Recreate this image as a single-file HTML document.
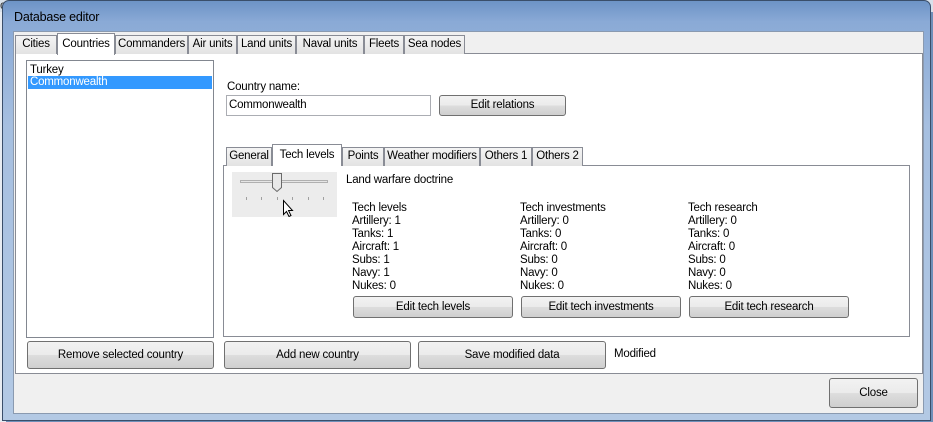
<!DOCTYPE html>
<html><head><meta charset="utf-8"><style>
*{box-sizing:border-box}
body{margin:0;width:933px;height:422px;overflow:hidden;background:#6f8fb8;font-family:"Liberation Sans",Arial,sans-serif;font-size:11.5px;color:#000;position:relative;letter-spacing:-0.2px}
.a{position:absolute}
.frame{left:2px;top:0;width:929px;height:421px;border:1px solid #3a4e6a;border-radius:7px 7px 0 0;background:linear-gradient(180deg,#6d93c6 0%,#8aaad6 5%,#a6bfe0 30%,#b3c9e4 100%)}
.client{left:13px;top:31px;width:911px;height:383px;background:#f0f0f0;border:1px solid #8a9ab0}
.panel{background:#fff;border:1px solid #898c95}
.tab{position:absolute;height:19px;background:linear-gradient(#f4f4f4,#e3e3e3);border:1px solid #898c95;border-bottom:none;text-align:center;line-height:17px;white-space:nowrap;overflow:hidden}
.tab.sel{background:#fff;height:22px;line-height:20px;z-index:2}
.btn{position:absolute;border:1px solid #707070;border-radius:3px;background:linear-gradient(#f2f2f2 0%,#ebebeb 50%,#dddddd 51%,#cfcfcf 100%);text-align:center;white-space:nowrap}
.t{position:absolute;white-space:nowrap;line-height:13px}
</style></head><body>
<div class="a" style="left:0;top:0;width:933px;height:12px;background:#d8e0ea"></div>
<div class="t" style="left:0;top:0;color:#333">col  ·  Questions - 1/16/2013 9:01:17 PM</div>
<div class="a" style="left:0;top:12px;width:6px;height:410px;background:#e8ecf2"></div>
<div class="a frame"></div>
<div class="t" style="left:14px;top:11px;font-size:12.5px">Database editor</div>
<div class="a client"></div>
<!-- main tabs -->
<div class="a panel" style="left:15px;top:53px;width:908px;height:321px"></div>
<div class="tab" style="left:15px;top:35px;width:42px">Cities</div>
<div class="tab sel" style="left:57px;top:33px;width:58px">Countries</div>
<div class="tab" style="left:115px;top:35px;width:73px">Commanders</div>
<div class="tab" style="left:188px;top:35px;width:49px">Air units</div>
<div class="tab" style="left:237px;top:35px;width:59px">Land units</div>
<div class="tab" style="left:296px;top:35px;width:68px">Naval units</div>
<div class="tab" style="left:364px;top:35px;width:40px">Fleets</div>
<div class="tab" style="left:404px;top:35px;width:61px">Sea nodes</div>
<!-- list -->
<div class="a" style="left:26px;top:60px;width:188px;height:278px;background:#fff;border:1px solid #828790"></div>
<div class="t" style="left:30px;top:64px">Turkey</div>
<div class="a" style="left:28px;top:76px;width:184px;height:13px;background:#3399ff"></div>
<div class="t" style="left:30px;top:76px;color:#fff">Commonwealth</div>
<div class="t" style="left:227px;top:81px">Country name:</div>
<div class="a" style="left:226px;top:95px;width:205px;height:21px;background:#fff;border:1px solid #abadb3"></div>
<div class="t" style="left:229px;top:99px">Commonwealth</div>
<div class="btn" style="left:439px;top:95px;width:127px;height:21px;line-height:19px">Edit relations</div>
<!-- sub tabs -->
<div class="a panel" style="left:223px;top:165px;width:687px;height:172px"></div>
<div class="tab" style="left:226px;top:147px;width:46px">General</div>
<div class="tab sel" style="left:272px;top:144px;width:70px">Tech levels</div>
<div class="tab" style="left:342px;top:147px;width:42px">Points</div>
<div class="tab" style="left:384px;top:147px;width:96px">Weather modifiers</div>
<div class="tab" style="left:480px;top:147px;width:52px">Others 1</div>
<div class="tab" style="left:532px;top:147px;width:51px">Others 2</div>
<!-- trackbar -->
<div class="a" style="left:232px;top:172px;width:105px;height:45px;background:#ececec"></div>
<div class="a" style="left:240px;top:180px;width:88px;height:3px;border:1px solid #b0b0b0;background:#e6e6e6"></div>
<svg class="a" style="left:232px;top:172px" width="105" height="45">
<path d="M40.5 1.5h9v14l-4.5 4-4.5-4z" fill="#e8e8e8" stroke="#6a6a6a"/>
<g stroke="#a0a0a0"><path d="M14.5 25v3M29.5 25v3M45.5 25v3M60.5 25v3M76.5 25v3M91.5 25v3"/></g>
<path d="M51.5 28.5v14l3-3 2.5 5 2-1-2.5-5h4z" fill="#fff" stroke="#000"/>
</svg>
<div class="t" style="left:346px;top:174px">Land warfare doctrine</div>
<div class="t" style="left:352px;top:202px">Tech levels<br>Artillery: 1<br>Tanks: 1<br>Aircraft: 1<br>Subs: 1<br>Navy: 1<br>Nukes: 0</div>
<div class="t" style="left:520px;top:202px">Tech investments<br>Artillery: 0<br>Tanks: 0<br>Aircraft: 0<br>Subs: 0<br>Navy: 0<br>Nukes: 0</div>
<div class="t" style="left:688px;top:202px">Tech research<br>Artillery: 0<br>Tanks: 0<br>Aircraft: 0<br>Subs: 0<br>Navy: 0<br>Nukes: 0</div>
<div class="btn" style="left:353px;top:296px;width:160px;height:22px;line-height:20px">Edit tech levels</div>
<div class="btn" style="left:521px;top:296px;width:160px;height:22px;line-height:20px">Edit tech investments</div>
<div class="btn" style="left:689px;top:296px;width:160px;height:22px;line-height:20px">Edit tech research</div>
<!-- bottom -->
<div class="btn" style="left:27px;top:341px;width:187px;height:28px;line-height:26px">Remove selected country</div>
<div class="btn" style="left:224px;top:341px;width:187px;height:28px;line-height:26px">Add new country</div>
<div class="btn" style="left:418px;top:341px;width:188px;height:28px;line-height:26px">Save modified data</div>
<div class="t" style="left:614px;top:348px">Modified</div>
<div class="btn" style="left:829px;top:378px;width:89px;height:30px;line-height:28px">Close</div>
</body></html>
